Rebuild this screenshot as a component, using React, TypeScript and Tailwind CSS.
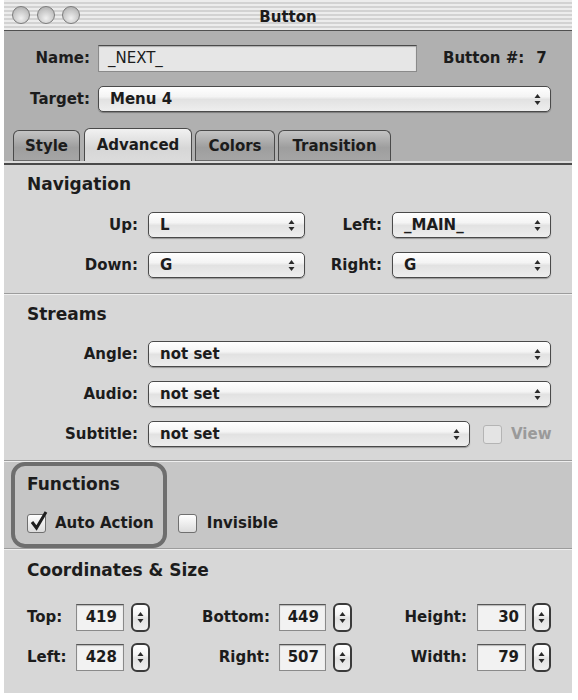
import React from 'react';

const selectBg =
  'bg-[linear-gradient(180deg,#ffffff_0%,#f4f4f4_40%,#e2e2e2_52%,#eeeeee_100%)]';

const Arrows: React.FC<{ className?: string }> = ({ className }) => (
  <svg width="7" height="13" viewBox="0 0 7 13" className={className}>
    <path d="M3.5 1 L6.5 5 L0.5 5 Z" fill="#2a2a2a" />
    <path d="M0.5 8 L6.5 8 L3.5 12 Z" fill="#2a2a2a" />
  </svg>
);

const Select: React.FC<{ value: string; width: string }> = ({ value, width }) => (
  <div
    className={`flex h-[26px] items-center rounded-[5px] border border-[#4a4a4a] ${selectBg} pl-[11px] text-[15px] font-bold text-[#1c1c1c] shadow-[0_1px_1px_rgba(0,0,0,0.3)] ${width}`}
  >
    <span>{value}</span>
    <Arrows className="ml-auto mr-[9px]" />
  </div>
);

const Stepper: React.FC = () => (
  <div
    className={`flex h-[29px] w-[19px] items-center justify-center rounded-[6px] border-2 border-[#3a3a3a] ${selectBg}`}
  >
    <Arrows />
  </div>
);

const NumberField: React.FC<{ value: string; width: string }> = ({ value, width }) => (
  <div
    className={`flex h-[27px] items-center justify-end border border-[#8a8a8a] border-t-[#555] bg-[#f2f2f2] pr-[6px] text-[15px] font-bold text-[#1c1c1c] shadow-[inset_0_1px_1px_rgba(0,0,0,0.25)] ${width}`}
  >
    {value}
  </div>
);

const Checkbox: React.FC<{ checked?: boolean; disabled?: boolean }> = ({ checked, disabled }) => (
  <div
    className={`relative h-[19px] w-[19px] rounded-[3px] border ${
      disabled ? 'border-[#b4b4b4] bg-[#e4e4e4]' : 'border-[#6f6f6f] bg-[linear-gradient(180deg,#ffffff,#dcdcdc)]'
    }`}
  >
    {checked && (
      <svg width="20" height="22" viewBox="0 0 20 22" className="absolute left-[1px] top-[-5px]">
        <path d="M3 12 L7.5 18 L17 2" fill="none" stroke="#1e1e1e" strokeWidth="3" />
      </svg>
    )}
  </div>
);

const Separator: React.FC = () => (
  <div>
    <div className="h-px bg-[#9c9c9c]" />
    <div className="h-px bg-[#eeeeee]" />
  </div>
);

const Tab: React.FC<{ label: string; width: string; active?: boolean }> = ({ label, width, active }) => (
  <div
    className={`flex items-center justify-center rounded-t-[6px] border-x border-t border-[#4a4a4a] text-[15px] font-bold text-[#1c1c1c] ${width} ${
      active
        ? 'h-[33px] bg-[linear-gradient(180deg,#f2f2f2_0%,#d6d6d6_60%,#dcdcdc_100%)]'
        : 'h-[31px] bg-[linear-gradient(180deg,#c4c4c4_0%,#9e9e9e_55%,#a6a6a6_100%)] shadow-[inset_0_-1px_0_#6a6a6a]'
    }`}
  >
    {label}
  </div>
);

const Light: React.FC = () => (
  <div className="h-[18px] w-[18px] rounded-full border border-[#7c7c7c] bg-[radial-gradient(circle_at_50%_70%,#f0f0f0_0%,#c9c9c9_55%,#a4a4a4_100%)]" />
);

export default function App() {
  return (
    <div className="min-h-[700px] bg-white pl-[4px] font-[family-name:DejaVu_Sans,sans-serif] text-[#1c1c1c]">
      <div className="w-[568px]">
        {/* title bar */}
        <div className="relative flex h-[31px] items-center border-b border-[#505050] bg-[repeating-linear-gradient(180deg,#ececec_0px,#ececec_2px,#d2d2d2_2px,#d2d2d2_4px)]">
          <div className="flex items-center gap-[7px] pl-[8px]">
            <Light />
            <Light />
            <Light />
          </div>
          <div className="absolute inset-x-0 top-[6px] text-center text-[15px] font-bold">Button</div>
        </div>

        {/* header area */}
        <div className="bg-[#b0b0b0] pt-[14px]">
          <div className="flex h-[27px] items-center">
            <div className="w-[86px] text-right text-[15px] font-bold">Name:</div>
            <div className="ml-[8px] flex h-[27px] w-[319px] items-center border border-[#8a8a8a] border-t-[#4a4a4a] bg-[#e6e6e6] pl-[9px] text-[15px] shadow-[inset_0_1px_1px_rgba(0,0,0,0.25)]">
              _NEXT_
            </div>
            <div className="ml-[26px] text-[15px] font-bold">
              Button #:<span className="ml-[12px]">7</span>
            </div>
          </div>
          <div className="mt-[14px] flex items-center">
            <div className="w-[86px] text-right text-[15px] font-bold">Target:</div>
            <div className="ml-[8px]">
              <Select value="Menu 4" width="w-[453px]" />
            </div>
          </div>
          <div className="mt-[16px] flex h-[33px] items-end gap-[3px] pl-[9px]">
            <Tab label="Style" width="w-[67px]" />
            <div className="ml-px">
              <Tab label="Advanced" width="w-[108px]" active />
            </div>
            <Tab label="Colors" width="w-[80px]" />
            <Tab label="Transition" width="w-[113px]" />
          </div>
        </div>
        <div className="h-[2px] bg-[#dcdcdc]" />
        <div className="h-[2px] bg-[#4a4a4a]" />

        {/* panel */}
        <div className="bg-[#d7d7d7]">
          {/* Navigation */}
          <div className="pb-[15px] pl-[23px] pt-[8px]">
            <div className="text-[17px] font-bold leading-[22px]">Navigation</div>
            <div className="mt-[17px] flex items-center">
              <div className="w-[111px] text-right text-[15px] font-bold">Up:</div>
              <div className="ml-[10px]">
                <Select value="L" width="w-[157px]" />
              </div>
              <div className="w-[77px] text-right text-[15px] font-bold">Left:</div>
              <div className="ml-[10px]">
                <Select value="_MAIN_" width="w-[159px]" />
              </div>
            </div>
            <div className="mt-[14px] flex items-center">
              <div className="w-[111px] text-right text-[15px] font-bold">Down:</div>
              <div className="ml-[10px]">
                <Select value="G" width="w-[157px]" />
              </div>
              <div className="w-[77px] text-right text-[15px] font-bold">Right:</div>
              <div className="ml-[10px]">
                <Select value="G" width="w-[159px]" />
              </div>
            </div>
          </div>
          <Separator />

          {/* Streams */}
          <div className="pb-[13px] pl-[23px] pt-[8px]">
            <div className="text-[17px] font-bold leading-[22px]">Streams</div>
            <div className="mt-[16px] flex items-center">
              <div className="w-[111px] text-right text-[15px] font-bold">Angle:</div>
              <div className="ml-[10px]">
                <Select value="not set" width="w-[403px]" />
              </div>
            </div>
            <div className="mt-[14px] flex items-center">
              <div className="w-[111px] text-right text-[15px] font-bold">Audio:</div>
              <div className="ml-[10px]">
                <Select value="not set" width="w-[403px]" />
              </div>
            </div>
            <div className="mt-[14px] flex items-center">
              <div className="w-[111px] text-right text-[15px] font-bold">Subtitle:</div>
              <div className="ml-[10px]">
                <Select value="not set" width="w-[322px]" />
              </div>
              <div className="ml-[13px]">
                <Checkbox disabled />
              </div>
              <div className="ml-[9px] text-[15px] font-bold text-[#9a9a9a]">View</div>
            </div>
          </div>
          <Separator />

          {/* Functions */}
          <div className="relative bg-[#c6c6c6] pb-[15px] pl-[23px] pt-[11px]">
            <div className="absolute left-[7px] top-0 h-[86px] w-[156px] rounded-[14px] border-4 border-[#6e6e6e]" />
            <div className="text-[17px] font-bold leading-[22px]">Functions</div>
            <div className="mt-[18px] flex h-[20px] items-center">
              <Checkbox checked />
              <div className="ml-[9px] text-[15px] font-bold">Auto Action</div>
              <div className="ml-[24px]">
                <Checkbox />
              </div>
              <div className="ml-[10px] text-[15px] font-bold">Invisible</div>
            </div>
          </div>
          <Separator />

          {/* Coordinates & Size */}
          <div className="pb-[21px] pl-[23px] pt-[9px]">
            <div className="text-[17px] font-bold leading-[22px]">Coordinates &amp; Size</div>
            {[
              ['Top:', '419', 'Bottom:', '449', 'Height:', '30'],
              ['Left:', '428', 'Right:', '507', 'Width:', '79'],
            ].map((r, i) => (
              <div key={r[0]} className={`flex h-[29px] items-center ${i === 0 ? 'mt-[22px]' : 'mt-[11px]'}`}>
                <div className="w-[49px] text-[15px] font-bold">{r[0]}</div>
                <NumberField value={r[1]} width="w-[48px]" />
                <div className="ml-[7px]">
                  <Stepper />
                </div>
                <div className="w-[129px] pr-[9px] text-right text-[15px] font-bold">{r[2]}</div>
                <NumberField value={r[3]} width="w-[47px]" />
                <div className="ml-[7px]">
                  <Stepper />
                </div>
                <div className="w-[125px] pr-[10px] text-right text-[15px] font-bold">{r[4]}</div>
                <NumberField value={r[5]} width="w-[49px]" />
                <div className="ml-[6px]">
                  <Stepper />
                </div>
              </div>
            ))}
          </div>
        </div>
      </div>
    </div>
  );
}
